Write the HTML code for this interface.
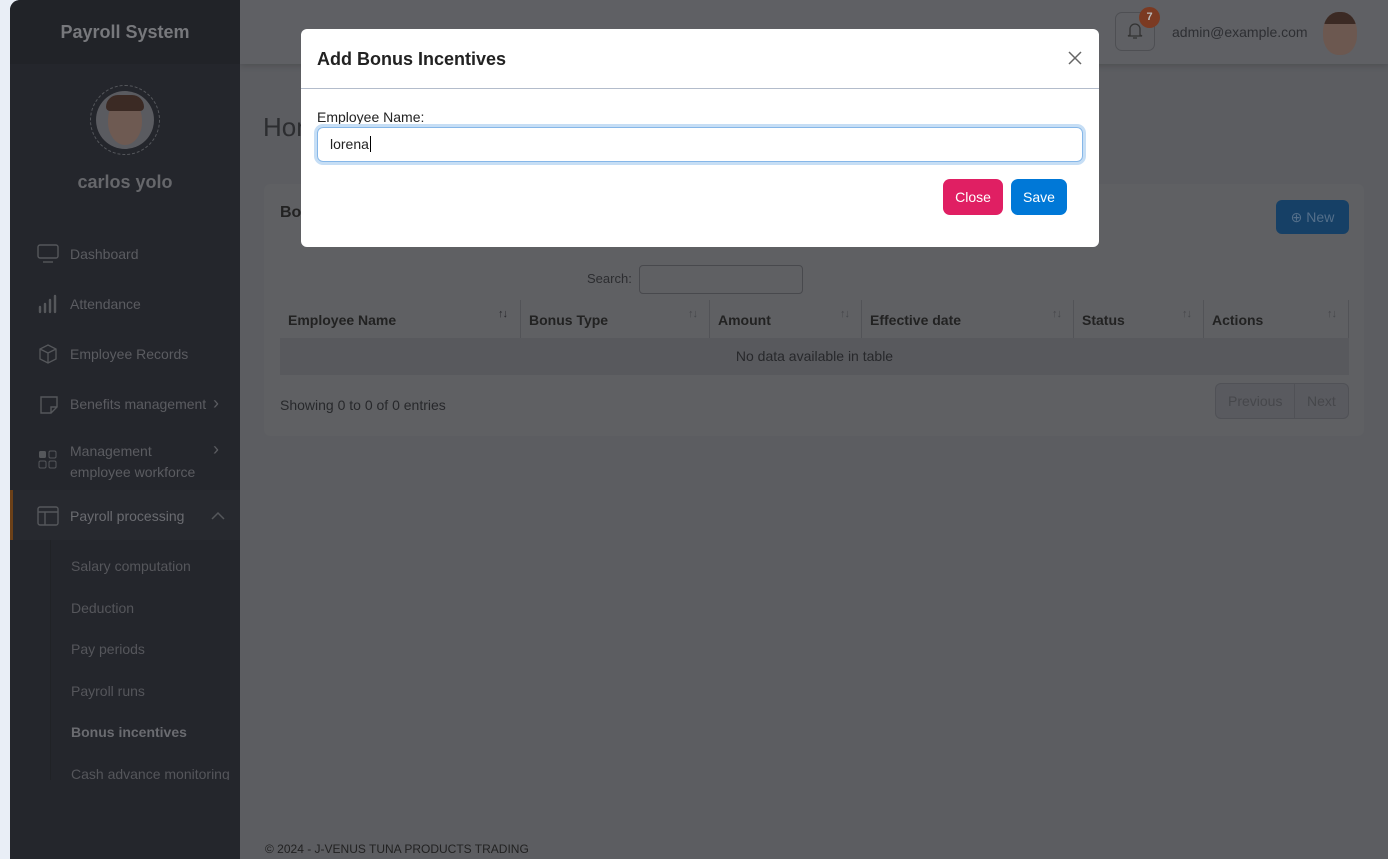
<!DOCTYPE html>
<html><head><meta charset="utf-8"><style>
*{box-sizing:border-box;margin:0;padding:0}
body{width:1388px;height:859px;overflow:hidden;background:#e9eef6;font-family:"Liberation Sans",sans-serif;position:relative}
.sb{position:absolute;left:10px;top:0;width:230px;height:859px;background:#24262c;border-top-left-radius:10px;overflow:hidden}
.sbh{height:64px;background:#212328;color:#77787c;font-weight:bold;font-size:18px;text-align:center;line-height:64px}
.av{position:absolute;left:80px;top:85px;width:70px;height:70px;border-radius:50%;border:1px dashed #55575c}
.avi{position:absolute;left:5px;top:5px;width:58px;height:58px;border-radius:50%;background:#5a5b60;overflow:hidden}
.face{position:absolute;left:12px;top:8px;width:34px;height:46px;border-radius:45% 45% 50% 50%;background:#6e5a52}
.hair{position:absolute;left:10px;top:4px;width:38px;height:16px;border-radius:18px 18px 6px 6px;background:#3b2a24}
.name{position:absolute;top:172px;width:230px;text-align:center;color:#66676b;font-size:18px;font-weight:bold}
.it{position:absolute;left:60px;color:#5b5c61;font-size:14px}
.ic{position:absolute;left:28px;width:20px;height:16px;border:1.5px solid #55575b;border-radius:3px}
.sub{position:absolute;left:61px;color:#55565b;font-size:14px}
.main{position:absolute;left:240px;top:0;right:0;height:859px;background:#5c5d61}
.top{position:absolute;left:240px;top:0;right:0;height:64px;background:#5f6064;box-shadow:0 2px 6px rgba(0,0,0,.15)}
.card{position:absolute;left:264px;top:184px;width:1100px;height:252px;background:#5f6063;border-radius:6px}
.ar{position:absolute;top:8px;font-size:11px;color:#46474b;font-weight:normal;letter-spacing:-1px}
.modal{position:absolute;left:301px;top:29px;width:798px;height:218px;background:#fff;border-radius:6px}
</style></head><body>
<div class="main"></div>
<div class="top">
 <div style="position:absolute;left:875px;top:12px;width:40px;height:39px;border:1px solid #4e4f53;border-radius:7px"></div>
 <svg style="position:absolute;left:886px;top:21px" width="18" height="20" viewBox="0 0 18 20"><path d="M4 14V8a5 5 0 0 1 10 0v6l2 1H2z M7 17h4" fill="none" stroke="#333" stroke-width="1.3"/></svg>
 <div style="position:absolute;left:899px;top:7px;width:21px;height:21px;border-radius:50%;background:#7b3a22;color:#bbb;font-size:11px;font-weight:bold;text-align:center;line-height:21px">7</div>
 <div style="position:absolute;left:932px;top:24px;font-size:14px;color:#2e2f33">admin@example.com</div>
 <div style="position:absolute;left:1083px;top:12px;width:34px;height:43px;border-radius:45%;background:#6c5850;overflow:hidden"><div style="width:34px;height:12px;background:#3b2a24;border-radius:16px 16px 4px 4px"></div></div>
</div>
<div style="position:absolute;left:263px;top:112px;font-size:26px;color:#2c2d30">Hom</div>
<div class="card">
 <div style="position:absolute;left:16px;top:20px;font-size:16px;font-weight:bold;color:#222">Bonus</div>
 <div style="position:absolute;left:1012px;top:16px;width:73px;height:34px;background:#164066;border-radius:6px;color:#546f8a;font-size:14px;line-height:34px;text-align:center">⊕ New</div>
 <div style="position:absolute;left:323px;top:87px;font-size:13px;color:#2c2d30">Search:</div>
 <div style="position:absolute;left:375px;top:81px;width:164px;height:29px;border:1px solid #48494d;border-radius:4px"></div>
 <div style="position:absolute;left:16px;top:116px;width:1069px;height:38px;font-weight:bold;font-size:14px;color:#222">
  <div style="position:absolute;left:8px;top:12px">Employee Name</div><span class="ar" style="left:218px;color:#2a2a2e">↑↓</span>
  <div style="position:absolute;left:240px;top:0;height:38px;border-left:1px solid #525357"></div>
  <div style="position:absolute;left:249px;top:12px">Bonus Type</div><span class="ar" style="left:408px">↑↓</span>
  <div style="position:absolute;left:429px;top:0;height:38px;border-left:1px solid #525357"></div>
  <div style="position:absolute;left:438px;top:12px">Amount</div><span class="ar" style="left:560px">↑↓</span>
  <div style="position:absolute;left:581px;top:0;height:38px;border-left:1px solid #525357"></div>
  <div style="position:absolute;left:590px;top:12px">Effective date</div><span class="ar" style="left:772px">↑↓</span>
  <div style="position:absolute;left:793px;top:0;height:38px;border-left:1px solid #525357"></div>
  <div style="position:absolute;left:802px;top:12px">Status</div><span class="ar" style="left:902px">↑↓</span>
  <div style="position:absolute;left:923px;top:0;height:38px;border-left:1px solid #525357"></div>
  <div style="position:absolute;left:932px;top:12px">Actions</div><span class="ar" style="left:1047px">↑↓</span>
  <div style="position:absolute;left:1068px;top:0;height:75px;border-left:1px solid #525357"></div>
 </div>
 <div style="position:absolute;left:16px;top:154px;width:1069px;height:37px;background:#58595d;text-align:center;line-height:37px;font-size:14px;color:#27282b">No data available in table</div>
 <div style="position:absolute;left:16px;top:213px;font-size:14px;color:#27282b">Showing 0 to 0 of 0 entries</div>
 <div style="position:absolute;left:951px;top:199px;width:134px;height:36px;border:1px solid #505156;border-radius:6px;background:#595a5f;font-size:14px;color:#46474b">
  <span style="position:absolute;left:12px;top:9px">Previous</span><div style="position:absolute;left:78px;top:0;height:34px;border-left:1px solid #505156"></div><span style="position:absolute;left:91px;top:9px">Next</span></div>
</div>
<div style="position:absolute;left:265px;top:842px;font-size:12px;color:#222">© 2024 - J-VENUS TUNA PRODUCTS TRADING</div>
<div class="sb">
 <div class="sbh">Payroll System</div>
 <div class="av"><div class="avi"><div class="face"></div><div class="hair"></div></div></div>
 <div class="name">carlos yolo</div>
 <svg style="position:absolute;left:27px;top:244px" width="22" height="20"><rect x="1" y="1" width="20" height="13" rx="2" fill="none" stroke="#55575b" stroke-width="1.4"/><path d="M6 18h10" stroke="#55575b" stroke-width="1.4"/></svg>
 <div class="it" style="top:246px">Dashboard</div>
 <svg style="position:absolute;left:28px;top:294px" width="20" height="20"><path d="M2 18v-5M7 18v-8M12 18V6M17 18V2" stroke="#55575b" stroke-width="2.4" stroke-linecap="round"/></svg>
 <div class="it" style="top:296px">Attendance</div>
 <svg style="position:absolute;left:28px;top:344px" width="20" height="20"><path d="M10 1l8 4v10l-8 4-8-4V5zM2 5l8 4 8-4M10 9v10" fill="none" stroke="#55575b" stroke-width="1.3"/></svg>
 <div class="it" style="top:346px">Employee Records</div>
 <svg style="position:absolute;left:28px;top:394px" width="22" height="22"><path d="M3 3h16v10l-6 6H3zM19 13h-6v6" fill="none" stroke="#55575b" stroke-width="1.4"/></svg>
 <div class="it" style="top:396px">Benefits management</div>
 <div class="it" style="left:203px;top:393px;font-size:18px">›</div>
 <svg style="position:absolute;left:28px;top:450px" width="20" height="20"><rect x="1" y="1" width="7" height="7" rx="1.5" fill="#55575b"/><rect x="11" y="1" width="7" height="7" rx="1.5" fill="none" stroke="#55575b"/><rect x="1" y="11" width="7" height="7" rx="1.5" fill="none" stroke="#55575b"/><rect x="11" y="11" width="7" height="7" rx="1.5" fill="none" stroke="#55575b"/></svg>
 <div class="it" style="top:441px;line-height:21px">Management<br>employee workforce</div>
 <div class="it" style="left:203px;top:439px;font-size:18px">›</div>
 <div style="position:absolute;left:0;top:490px;width:230px;height:50px;background:#27292f;border-left:3px solid #6b4018"></div>
 <svg style="position:absolute;left:27px;top:506px" width="22" height="20"><rect x="1" y="1" width="20" height="18" rx="2" fill="none" stroke="#55575b" stroke-width="1.4"/><path d="M1 6h20M8 6v13" stroke="#55575b" stroke-width="1.4"/></svg>
 <div class="it" style="top:508px;color:#6a6b70">Payroll processing</div>
 <svg style="position:absolute;left:201px;top:511px" width="14" height="9"><path d="M1 8l6-6 6 6" fill="none" stroke="#55575b" stroke-width="1.5"/></svg>
 <div style="position:absolute;left:40px;top:540px;height:240px;border-left:1px solid #202226"></div>
 <div class="sub" style="top:558px">Salary computation</div>
 <div class="sub" style="top:600px">Deduction</div>
 <div class="sub" style="top:641px">Pay periods</div>
 <div class="sub" style="top:683px">Payroll runs</div>
 <div class="sub" style="top:724px;color:#6a6b70;font-weight:bold">Bonus incentives</div>
 <div class="sub" style="top:766px;height:14px;overflow:hidden">Cash advance monitoring</div>
</div>
<div class="modal">
 <div style="position:absolute;left:16px;top:20px;font-size:18px;font-weight:bold;color:#222">Add Bonus Incentives</div>
 <svg style="position:absolute;left:767px;top:22px" width="14" height="14"><path d="M1 1L13 13M13 1L1 13" stroke="#666" stroke-width="1.5"/></svg>
 <div style="position:absolute;left:0;top:59px;width:798px;border-top:1px solid #b3bccb"></div>
 <div style="position:absolute;left:16px;top:80px;font-size:14px;color:#222">Employee Name:</div>
 <div style="position:absolute;left:16px;top:98px;width:766px;height:35px;border:1px solid #86b7e8;border-radius:6px;box-shadow:0 0 0 3px #c6def5"></div>
 <div style="position:absolute;left:29px;top:107px;font-size:14px;color:#222">lorena<span style="border-left:1px solid #000;margin-left:1px"></span></div>
 <div style="position:absolute;left:642px;top:150px;width:60px;height:36px;background:#e01f63;border-radius:7px;color:#fff;font-size:14px;text-align:center;line-height:36px">Close</div>
 <div style="position:absolute;left:710px;top:150px;width:56px;height:36px;background:#0078d7;border-radius:7px;color:#fff;font-size:14px;text-align:center;line-height:36px">Save</div>
</div>
</body></html>
